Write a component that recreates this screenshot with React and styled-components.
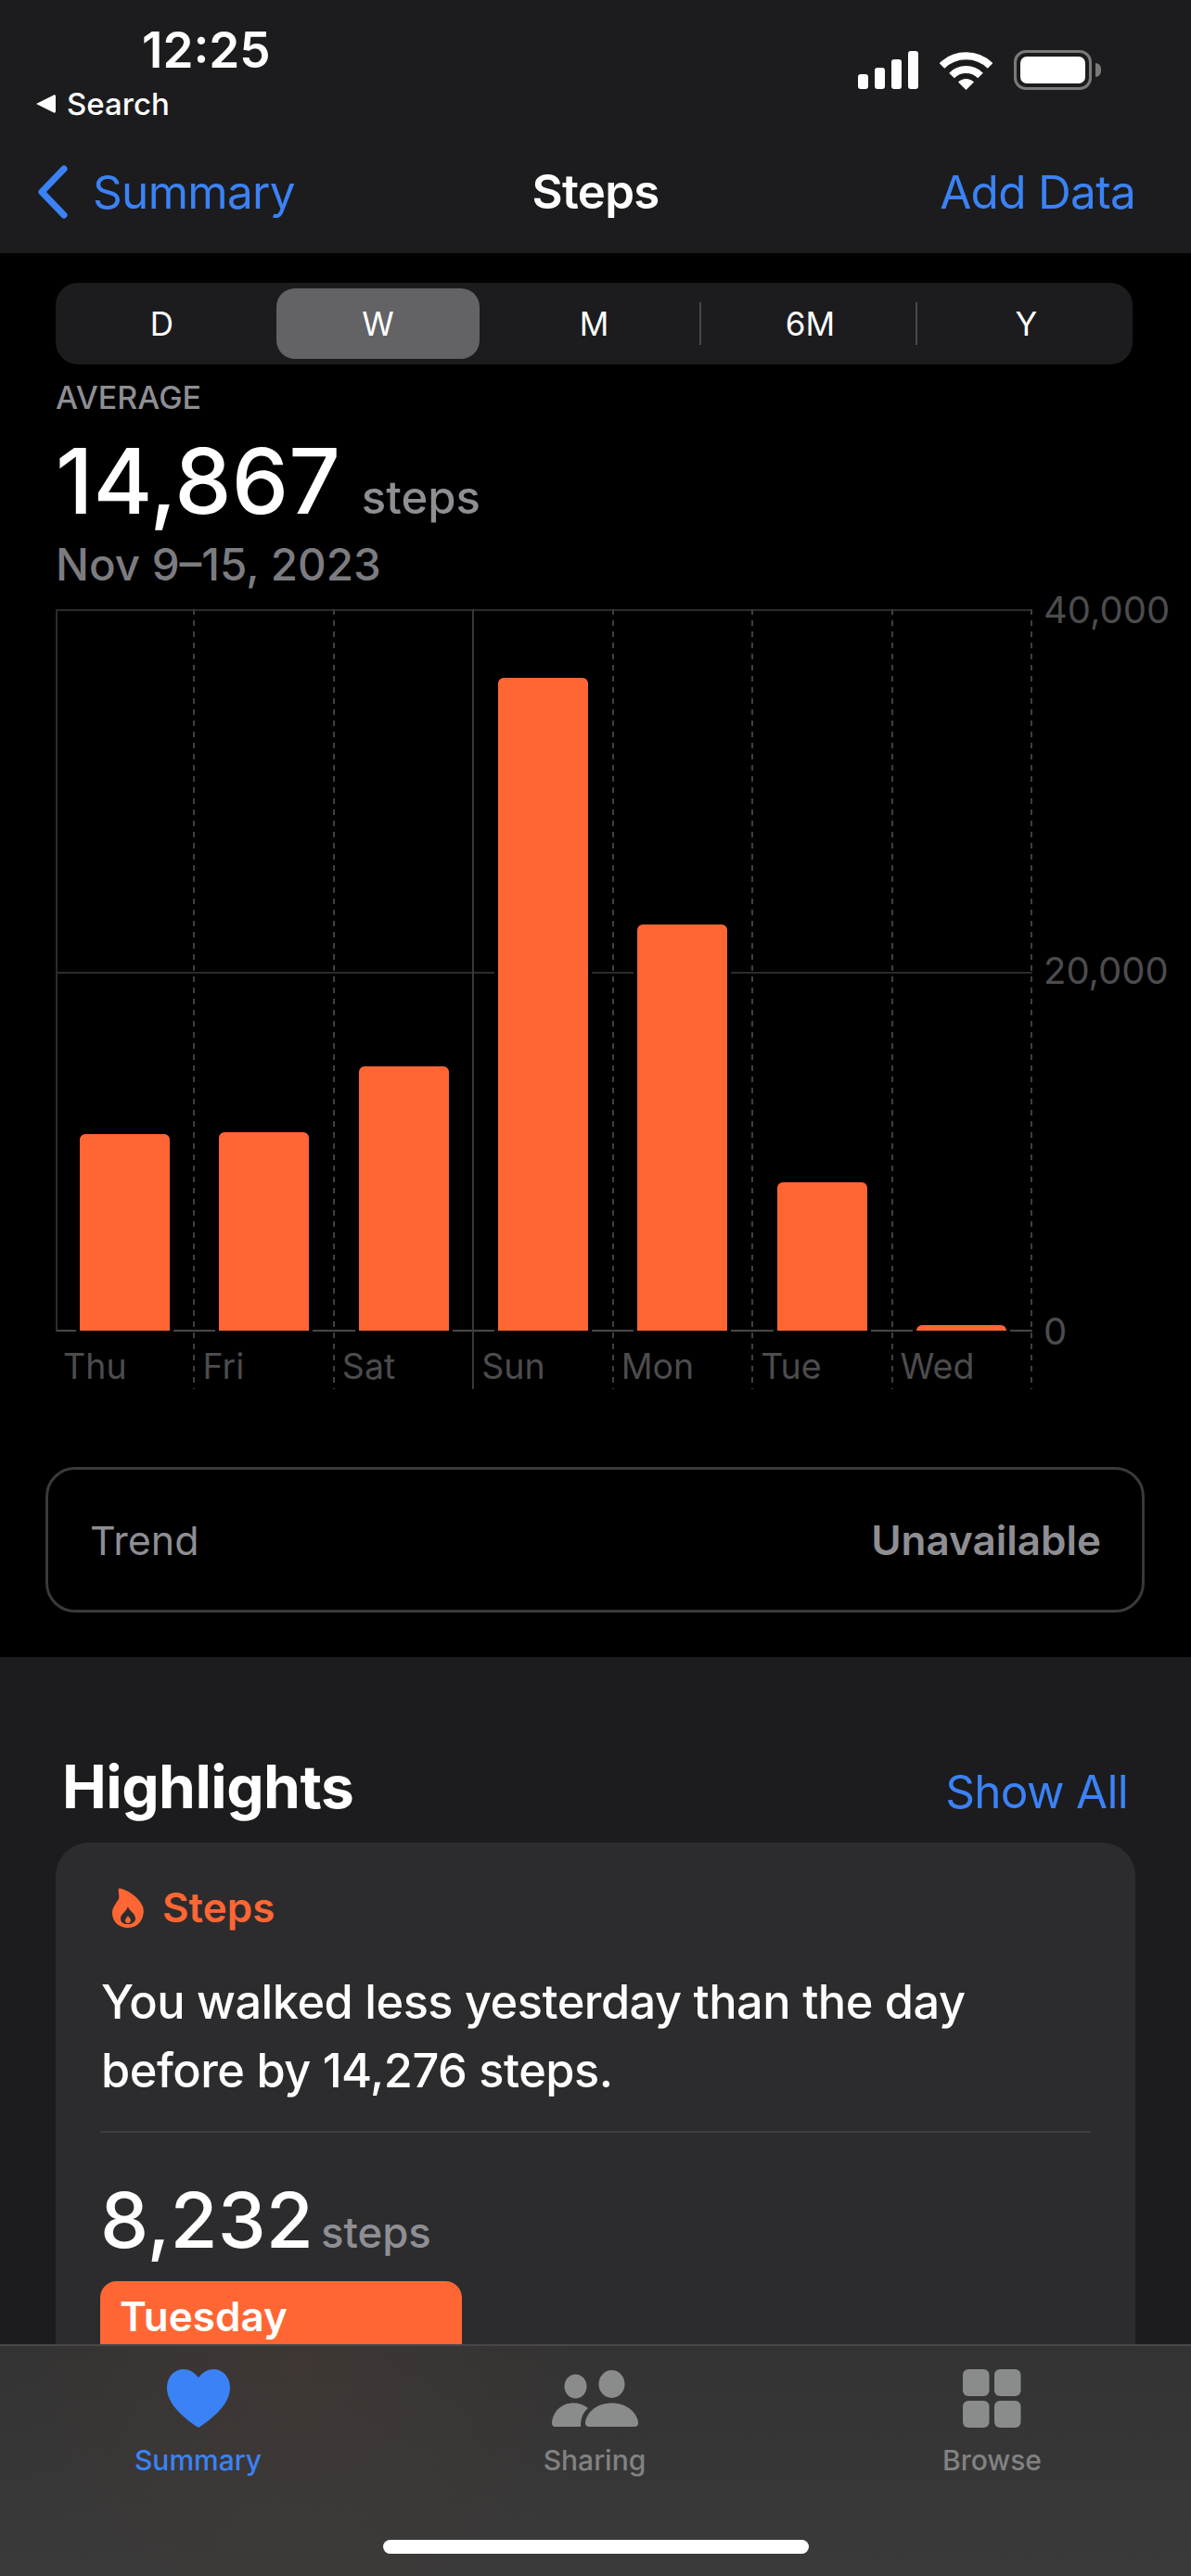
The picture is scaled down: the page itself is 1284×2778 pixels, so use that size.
import React from "react";
import styled, { createGlobalStyle } from "styled-components";

const GlobalStyle = createGlobalStyle`
  html, body {
    margin: 0;
    padding: 0;
    background: #000;
  }
  body {
    font-family: Inter, "Liberation Sans", sans-serif;
    -webkit-font-smoothing: antialiased;
  }
`;

const BLUE = "#3b82f6";
const ORANGE = "#ff6633";
const GRAY = "#8e8e93";
const CHART_GRAY = "#4c4c4e";
const PLOT_HEIGHT = 778;
const MAX_STEPS = 40000;

const days = [
  { name: "Thu", steps: 10900 },
  { name: "Fri", steps: 11000 },
  { name: "Sat", steps: 14650 },
  { name: "Sun", steps: 36200, solid: true },
  { name: "Mon", steps: 22508 },
  { name: "Tue", steps: 8232 },
  { name: "Wed", steps: 310 },
];

const ranges = ["D", "W", "M", "6M", "Y"];

const Phone = styled.div`
  position: relative;
  width: 1284px;
  height: 2778px;
  overflow: hidden;
  background: #1c1c1e;
  color: #fff;
`;

const Header = styled.header`
  height: 273px;
  box-sizing: border-box;
  background: #1c1c1e;
  padding-top: 28px;
`;

const StatusBar = styled.div`
  display: flex;
  justify-content: space-between;
  align-items: flex-start;
  padding: 0 97px 0 38px;
`;

const StatusLeft = styled.div`
  display: flex;
  flex-direction: column;
`;

const Time = styled.div`
  font-size: 53px;
  line-height: 52px;
  font-weight: 600;
  margin-left: 115px;
`;

const BackToSearch = styled.div`
  display: flex;
  align-items: center;
  gap: 12px;
  margin-top: 13px;
  font-size: 33px;
  line-height: 38px;
  font-weight: 500;
`;

const StatusIcons = styled.div`
  display: flex;
  align-items: center;
  margin-top: 26px;
`;

const Battery = styled.div`
  width: 84px;
  height: 43px;
  box-sizing: border-box;
  border: 3px solid #7a7a7a;
  border-radius: 13px;
  padding: 4px;
  margin-left: 23px;
  display: flex;
`;

const BatteryLevel = styled.div`
  flex: 1;
  background: #fff;
  border-radius: 7px;
`;

const BatteryNub = styled.div`
  width: 6px;
  height: 15px;
  margin-left: 4px;
  background: #7a7a7a;
  border-radius: 0 8px 8px 0;
`;

const NavBar = styled.nav`
  display: grid;
  grid-template-columns: 1fr auto 1fr;
  align-items: center;
  padding: 0 40px;
  margin-top: 46px;
`;

const NavBack = styled.div`
  display: flex;
  align-items: center;
  gap: 27px;
  color: ${BLUE};
  font-size: 49.5px;
  line-height: 60px;
  letter-spacing: -0.7px;
`;

const NavTitle = styled.div`
  font-size: 51px;
  line-height: 60px;
  font-weight: 600;
  letter-spacing: -0.7px;
`;

const NavAction = styled.div`
  justify-self: end;
  margin-right: 20px;
  color: ${BLUE};
  font-size: 49.5px;
  line-height: 60px;
  letter-spacing: -0.7px;
`;

const ChartSection = styled.section`
  height: 1514px;
  box-sizing: border-box;
  background: #000;
  padding: 32px 0 0 60px;
`;

const Segments = styled.div`
  width: 1161px;
  height: 88px;
  box-sizing: border-box;
  padding: 6px 0;
  background: #1c1c1e;
  border-radius: 24px;
  display: grid;
  grid-template-columns: repeat(5, 233px);
  justify-content: center;
`;

const Segment = styled.div`
  display: flex;
  align-items: center;
  justify-content: center;
  font-size: 35px;
  color: #fff;
  border-radius: 20px;
  margin: 0 7px;
  background: ${(p) => (p.$active ? "#636366" : "transparent")};
  position: relative;
  ${(p) =>
    p.$divider &&
    `
    &::after {
      content: "";
      position: absolute;
      right: -6px;
      top: 15px;
      bottom: 15px;
      width: 2px;
      background: #48484a;
    }
  `}
`;

const Caption = styled.div`
  margin-top: 17px;
  font-size: 34px;
  line-height: 38px;
  font-weight: 500;
  color: ${GRAY};
`;

const Total = styled.div`
  display: flex;
  align-items: baseline;
  margin-top: 25px;
  height: 92px;
`;

const TotalValue = styled.span`
  font-size: 97.5px;
  line-height: 92px;
  font-weight: 500;
`;

const Unit = styled.span`
  font-size: ${(p) => p.$size || 49}px;
  font-weight: 500;
  color: ${GRAY};
  margin-left: ${(p) => p.$gap || 23}px;
`;

const DateRange = styled.div`
  margin-top: 17px;
  font-size: 47.5px;
  line-height: 54px;
  font-weight: 500;
  color: #7c7c80;
`;

const Chart = styled.div`
  display: flex;
  margin-top: 21px;
`;

const Plot = styled.div`
  width: 1053px;
  display: grid;
  grid-template-columns: repeat(7, 1fr);
  align-items: start;
  background-image:
    linear-gradient(#2c2c2e, #2c2c2e),
    linear-gradient(#2c2c2e, #2c2c2e),
    linear-gradient(#48484a, #48484a);
  background-size: 100% 2px;
  background-repeat: no-repeat;
  background-position: 0 0, 0 391px, 0 777px;
`;

const DayColumn = styled.div`
  height: 841px;
  background-image: ${(p) =>
    p.$solid
      ? "linear-gradient(#3a3a3c, #3a3a3c)"
      : "repeating-linear-gradient(#3f3f41 0 6px, transparent 6px 12px)"};
  background-size: 2px 100%;
  background-repeat: no-repeat;
  background-position: right top;
`;

const BarSlot = styled.div`
  height: ${PLOT_HEIGHT}px;
  display: flex;
  align-items: flex-end;
  justify-content: center;
  box-shadow: ${(p) => (p.$first ? "inset 2px 0 0 #2c2c2e" : "none")};
`;

const Bar = styled.div`
  width: 97px;
  margin-right: 2px;
  background: ${ORANGE};
  border-radius: 6px 6px 0 0;
  box-shadow: 0 0 0 4px #000;
`;

const DayLabel = styled.div`
  font-size: 37.5px;
  line-height: 44px;
  margin: 17px 0 0 8px;
  color: ${CHART_GRAY};
`;

const YAxis = styled.div`
  height: ${PLOT_HEIGHT}px;
  display: flex;
  flex-direction: column;
  justify-content: space-between;
  margin-left: 12px;
`;

const YLabel = styled.div`
  height: 0;
  display: flex;
  align-items: center;
  font-size: 40px;
  color: ${CHART_GRAY};
`;

const TrendCard = styled.div`
  width: 1185px;
  height: 157px;
  box-sizing: border-box;
  margin: 84px 0 0 -11px;
  padding: 0 44px 0 45px;
  border: 3px solid #3a3a3c;
  border-radius: 32px;
  display: flex;
  align-items: center;
  justify-content: space-between;
  font-size: 43px;
  color: ${GRAY};
`;

const TrendValue = styled.span`
  font-size: 44px;
  font-weight: 600;
`;

const Highlights = styled.section`
  padding: 104px 60px 0;
`;

const SectionHead = styled.div`
  display: flex;
  align-items: baseline;
  justify-content: space-between;
  padding: 0 8px 0 7px;
`;

const SectionTitle = styled.h2`
  margin: 0;
  font-size: 64px;
  line-height: 72px;
  font-weight: 700;
  letter-spacing: -0.5px;
`;

const ShowAll = styled.span`
  color: ${BLUE};
  font-size: 49.5px;
  letter-spacing: -0.7px;
`;

const Card = styled.article`
  margin-top: 24px;
  height: 700px;
  box-sizing: border-box;
  padding: 43px 48px 0;
  background: #2c2c2e;
  border-radius: 36px 36px 0 0;
`;

const CardTag = styled.div`
  display: flex;
  align-items: center;
  gap: 20px;
  margin-left: 13px;
  color: ${ORANGE};
  font-size: 44px;
  line-height: 54px;
  font-weight: 600;
`;

const CardText = styled.p`
  margin: 38px 0 0 1px;
  font-size: 50.5px;
  line-height: 74px;
  font-weight: 500;
  letter-spacing: -0.5px;
`;

const CardDivider = styled.div`
  height: 2px;
  background: #3f3f41;
  margin-top: 28px;
  width: 1068px;
`;

const CardValue = styled.div`
  display: flex;
  align-items: baseline;
  margin: 48px 0 0 0;
`;

const CardNumber = styled.span`
  font-size: 83px;
  line-height: 92px;
  font-weight: 500;
`;

const DayTag = styled.div`
  width: 390px;
  height: 110px;
  box-sizing: border-box;
  margin-top: 20px;
  padding: 10px 0 0 21px;
  background: ${ORANGE};
  border-radius: 18px 18px 0 0;
  font-size: 44px;
  line-height: 56px;
  font-weight: 600;
`;

const TabBar = styled.nav`
  position: absolute;
  left: 0;
  right: 0;
  bottom: 0;
  height: 250px;
  box-sizing: border-box;
  border-top: 2px solid #48484a;
  background:
    radial-gradient(circle at 25% 8%, rgba(70, 58, 52, 0.55), rgba(70, 58, 52, 0) 320px),
    linear-gradient(#333333, #3a3a3a);
  display: grid;
  grid-template-columns: 427px 428px 429px;
`;

const Tab = styled.div`
  display: flex;
  flex-direction: column;
  align-items: center;
  padding-top: 24px;
  color: ${(p) => (p.$active ? BLUE : "#828282")};
`;

const TabIconWrap = styled.div`
  height: 64px;
  display: flex;
  align-items: center;
  justify-content: center;
`;

const TabLabel = styled.div`
  margin-top: 17px;
  font-size: 30px;
  line-height: 36px;
  font-weight: 500;
`;

const HomeIndicator = styled.div`
  position: absolute;
  left: 413px;
  bottom: 24px;
  width: 459px;
  height: 15px;
  border-radius: 8px;
  background: #fff;
`;

const SignalIcon = () => (
  <svg width="65" height="41" viewBox="0 0 65 41" fill="#fff">
    <rect x="0" y="25" width="11" height="16" rx="3" />
    <rect x="18" y="18" width="11" height="23" rx="3" />
    <rect x="36" y="9" width="11" height="32" rx="3" />
    <rect x="54" y="0" width="11" height="41" rx="3" />
  </svg>
);

const WifiIcon = () => (
  <svg width="57" height="42" viewBox="0 0 57 42" style={{ marginLeft: 23 }}>
    <path d="M2.5 16A37 37 0 0 1 54.5 16" fill="none" stroke="#fff" strokeWidth="8" />
    <path d="M13 26.5A22 22 0 0 1 44 26.5" fill="none" stroke="#fff" strokeWidth="8" />
    <path d="M28.5 42L20 33.5A12 12 0 0 1 37 33.5Z" fill="#fff" />
  </svg>
);

const BackTriangle = () => (
  <svg width="22" height="20" viewBox="0 0 22 20" fill="#fff">
    <path d="M1 10L20 0.5C21 0 22 0.8 22 2V18C22 19.2 21 20 20 19.5Z" />
  </svg>
);

const Chevron = () => (
  <svg width="33" height="58" viewBox="0 0 33 58" fill="none">
    <polyline
      points="29,4 5,29 29,54"
      stroke={BLUE}
      strokeWidth="7"
      strokeLinecap="round"
      strokeLinejoin="round"
    />
  </svg>
);

const FlameIcon = () => (
  <svg width="34" height="43" viewBox="0 0 34 43" fill={ORANGE}>
    <path
      fillRule="evenodd"
      d="M7 .5C12 0 28 8 33 20C36 30 30 43 17 43C7 43 0 36 0 27C0 21 4 17 7 12C8 8 6 3 7 .5ZM17 20C18 25 25 27 25 33C25 37 21 39 17 39C12 39 9 37 9 33C9 28 15 26 17 20Z"
    />
    <path d="M17 30C18 32 20 33 20 35C20 37 18 38 17 38C15 38 14 37 14 35C14 33 16 32 17 30Z" />
  </svg>
);

const HeartIcon = () => (
  <svg width="68" height="63" viewBox="0 0 68 63" fill="currentColor">
    <path d="M34 9C29 3 24 0 18 0C8 0 0 8 0 20C0 37 17 52 34 63C51 52 68 37 68 20C68 8 60 0 50 0C44 0 39 3 34 9Z" />
  </svg>
);

const PeopleIcon = () => (
  <svg width="93" height="61" viewBox="0 0 93 61" fill="#8a8c8c">
    <ellipse cx="25.5" cy="17.5" rx="12" ry="13" />
    <ellipse cx="64.5" cy="15" rx="14" ry="15" />
    <path d="M40 61C37 61 35.5 59 36 56C38 44 50 35.5 64.5 35.5C79 35.5 91 44 93 56C93.5 59 92 61 89 61Z" />
    <path d="M3 61C1 61 0 59 0 57C1 44 11 35.5 23 35.5C29 35.5 35 37.5 39 41C34 45 31 51 31 61Z" />
  </svg>
);

const GridIcon = () => (
  <svg width="63" height="63" viewBox="0 0 63 63" fill="#8a8c8c">
    <rect x="0" y="0" width="28.5" height="29" rx="6" />
    <rect x="34" y="0" width="28.5" height="29" rx="6" />
    <rect x="0" y="34" width="28.5" height="29" rx="6" />
    <rect x="34" y="34" width="28.5" height="29" rx="6" />
  </svg>
);

export default function App() {
  return (
    <Phone>
      <GlobalStyle />
      <Header>
        <StatusBar>
          <StatusLeft>
            <Time>12:25</Time>
            <BackToSearch>
              <BackTriangle />
              Search
            </BackToSearch>
          </StatusLeft>
          <StatusIcons>
            <SignalIcon />
            <WifiIcon />
            <Battery>
              <BatteryLevel />
            </Battery>
            <BatteryNub />
          </StatusIcons>
        </StatusBar>
        <NavBar>
          <NavBack>
            <Chevron />
            Summary
          </NavBack>
          <NavTitle>Steps</NavTitle>
          <NavAction>Add Data</NavAction>
        </NavBar>
      </Header>

      <ChartSection>
        <Segments>
          {ranges.map((r, i) => (
            <Segment key={r} $active={r === "W"} $divider={i === 2 || i === 3}>
              {r}
            </Segment>
          ))}
        </Segments>
        <Caption>AVERAGE</Caption>
        <Total>
          <TotalValue>14,867</TotalValue>
          <Unit>steps</Unit>
        </Total>
        <DateRange>Nov 9–15, 2023</DateRange>
        <Chart>
          <Plot>
            {days.map((d, i) => (
              <DayColumn key={d.name} $solid={i === 2}>
                <BarSlot $first={i === 0}>
                  <Bar style={{ height: (d.steps / MAX_STEPS) * PLOT_HEIGHT }} />
                </BarSlot>
                <DayLabel>{d.name}</DayLabel>
              </DayColumn>
            ))}
          </Plot>
          <YAxis>
            <YLabel>40,000</YLabel>
            <YLabel>20,000</YLabel>
            <YLabel>0</YLabel>
          </YAxis>
        </Chart>
        <TrendCard>
          Trend
          <TrendValue>Unavailable</TrendValue>
        </TrendCard>
      </ChartSection>

      <Highlights>
        <SectionHead>
          <SectionTitle>Highlights</SectionTitle>
          <ShowAll>Show All</ShowAll>
        </SectionHead>
        <Card>
          <CardTag>
            <FlameIcon />
            Steps
          </CardTag>
          <CardText>
            You walked less yesterday than the day
            <br />
            before by 14,276 steps.
          </CardText>
          <CardDivider />
          <CardValue>
            <CardNumber>8,232</CardNumber>
            <Unit $gap={8} $size={45.5}>steps</Unit>
          </CardValue>
          <DayTag>Tuesday</DayTag>
        </Card>
      </Highlights>

      <TabBar>
        <Tab $active>
          <TabIconWrap>
            <HeartIcon />
          </TabIconWrap>
          <TabLabel>Summary</TabLabel>
        </Tab>
        <Tab>
          <TabIconWrap>
            <PeopleIcon />
          </TabIconWrap>
          <TabLabel>Sharing</TabLabel>
        </Tab>
        <Tab>
          <TabIconWrap>
            <GridIcon />
          </TabIconWrap>
          <TabLabel>Browse</TabLabel>
        </Tab>
      </TabBar>
      <HomeIndicator />
    </Phone>
  );
}
